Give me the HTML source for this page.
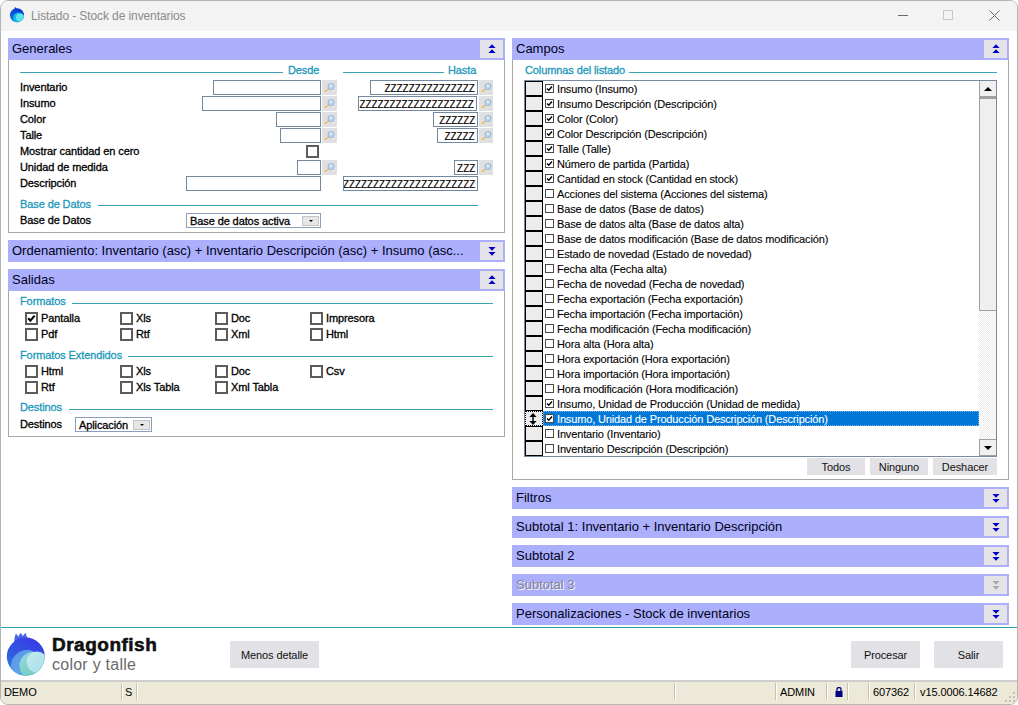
<!DOCTYPE html><html><head><meta charset="utf-8"><style>
html,body{margin:0;padding:0;}
body{width:1018px;height:705px;overflow:hidden;position:relative;background:#fff;font-family:"Liberation Sans",sans-serif;}
.t{position:absolute;white-space:nowrap;font-family:"Liberation Sans",sans-serif;}
.s11{letter-spacing:-0.1px;-webkit-text-stroke:0.3px currentColor}
.inp{position:absolute;box-sizing:border-box;border:1px solid #7488a0;background:#fff;overflow:hidden;}
.inp span{position:absolute;right:2px;top:2px;font:11px/11px "Liberation Sans",sans-serif;color:#000;white-space:nowrap;transform:scaleX(0.895);transform-origin:100% 0;-webkit-text-stroke:0.2px #000}
.cb13{position:absolute;width:13px;height:13px;box-sizing:border-box;border:2px solid #5c5c5c;background:#fff;}
.cb13 svg{position:absolute;left:0;top:0}
.cb9{position:absolute;width:9px;height:9px;box-sizing:border-box;border:1px solid #4a4a4a;background:#fff;}
.btn{position:absolute;background:#e1e1e6;}
</style></head><body>
<div style="position:absolute;left:0;top:0;width:1018px;height:705px;background:#fff;border:1px solid #b4b4b4;box-sizing:border-box;border-radius:8px;overflow:hidden">
</div>
<div style="position:absolute;left:1px;top:1px;width:1016px;height:30px;background:#f3f3f3;border-radius:7px 7px 0 0"></div>
<svg style="position:absolute;left:9px;top:6px" width="17" height="17" viewBox="0 0 17 17">
<defs><linearGradient id="ig" x1="0.6" y1="0" x2="0.3" y2="1"><stop offset="0" stop-color="#0a2fd0"/><stop offset="1" stop-color="#0a7ee8"/></linearGradient>
<clipPath id="ic"><circle cx="8" cy="9.2" r="7"/></clipPath></defs>
<path d="M5 4 L6 1 L8 2.5 Z" fill="#1a40d8"/>
<circle cx="8" cy="9.2" r="7" fill="url(#ig)"/>
<g clip-path="url(#ic)">
<circle cx="9.5" cy="12" r="5.5" fill="#12b8e0"/>
<circle cx="11" cy="11.5" r="4" fill="#5ee0ea"/>
</g>
</svg>
<div class="t " style="left:31px;top:10px;font-size:12px;line-height:12px;color:#8a8a8a;letter-spacing:-0.1px">Listado - Stock de inventarios</div>
<div style="position:absolute;left:898px;top:15px;width:10px;height:1px;background:#6a6a6a"></div>
<div style="position:absolute;left:943px;top:10px;width:10px;height:10px;border:1px solid #c8c8c8;box-sizing:border-box"></div>
<svg style="position:absolute;left:989px;top:10px" width="11" height="11" viewBox="0 0 11 11"><path d="M0.5 0.5L10.5 10.5M10.5 0.5L0.5 10.5" stroke="#6a6a6a" stroke-width="1"/></svg>
<div style="position:absolute;left:8px;top:38px;width:497px;height:195px;border:1px solid #a8a8a8;box-sizing:border-box;background:#fff"></div>
<div style="position:absolute;left:8px;top:38px;width:497px;height:22px;background:#abaffc"></div>
<div class="t " style="left:12px;top:42px;font-size:13px;line-height:13px;color:#000018;">Generales</div>
<div style="position:absolute;left:480px;top:40px;width:23px;height:18px;background:#e3e3e8"></div>
<div style="position:absolute;left:488px;top:44px;width:8px;height:10px;line-height:0"><svg width="8" height="10" viewBox="0 0 8 10"><path d="M4 0.2L7.6 4H0.4Z M4 5.2L7.6 9H0.4Z" fill="#0000c8"/></svg></div>
<div style="position:absolute;left:20px;top:72px;width:263px;height:1px;background:#3ba3b3"></div>
<div class="t s11" style="left:288px;top:65px;font-size:11px;line-height:11px;color:#1c98ba;">Desde</div>
<div style="position:absolute;left:343px;top:72px;width:101px;height:1px;background:#3ba3b3"></div>
<div class="t s11" style="left:448px;top:65px;font-size:11px;line-height:11px;color:#1c98ba;">Hasta</div>
<div class="t s11" style="left:20px;top:82px;font-size:11px;line-height:11px;color:#000;">Inventario</div>
<div class="t s11" style="left:20px;top:98px;font-size:11px;line-height:11px;color:#000;">Insumo</div>
<div class="t s11" style="left:20px;top:114px;font-size:11px;line-height:11px;color:#000;">Color</div>
<div class="t s11" style="left:20px;top:130px;font-size:11px;line-height:11px;color:#000;">Talle</div>
<div class="t s11" style="left:20px;top:146px;font-size:11px;line-height:11px;color:#000;">Mostrar cantidad en cero</div>
<div class="t s11" style="left:20px;top:162px;font-size:11px;line-height:11px;color:#000;">Unidad de medida</div>
<div class="t s11" style="left:20px;top:178px;font-size:11px;line-height:11px;color:#000;">Descripción</div>
<div class="inp" style="left:213px;top:80px;width:108px;height:15px"><span></span></div>
<div style="position:absolute;left:322px;top:80px;width:15px;height:15px;background:#e0e0e3"><svg width="15" height="15" viewBox="0 0 15 15"><path d="M3.3 11.4L6.3 9.2" stroke="#ecbf68" stroke-width="1.7" stroke-linecap="round"/><circle cx="9" cy="6.6" r="3" fill="#bcdaf6" stroke="#9ab0c8" stroke-width="1"/><circle cx="8.8" cy="5.6" r="1.2" fill="#e8f4ff" opacity="0.9"/></svg></div>
<div class="inp" style="left:202px;top:96px;width:119px;height:15px"><span></span></div>
<div style="position:absolute;left:322px;top:96px;width:15px;height:15px;background:#e0e0e3"><svg width="15" height="15" viewBox="0 0 15 15"><path d="M3.3 11.4L6.3 9.2" stroke="#ecbf68" stroke-width="1.7" stroke-linecap="round"/><circle cx="9" cy="6.6" r="3" fill="#bcdaf6" stroke="#9ab0c8" stroke-width="1"/><circle cx="8.8" cy="5.6" r="1.2" fill="#e8f4ff" opacity="0.9"/></svg></div>
<div class="inp" style="left:276px;top:112px;width:45px;height:15px"><span></span></div>
<div style="position:absolute;left:322px;top:112px;width:15px;height:15px;background:#e0e0e3"><svg width="15" height="15" viewBox="0 0 15 15"><path d="M3.3 11.4L6.3 9.2" stroke="#ecbf68" stroke-width="1.7" stroke-linecap="round"/><circle cx="9" cy="6.6" r="3" fill="#bcdaf6" stroke="#9ab0c8" stroke-width="1"/><circle cx="8.8" cy="5.6" r="1.2" fill="#e8f4ff" opacity="0.9"/></svg></div>
<div class="inp" style="left:280px;top:128px;width:41px;height:15px"><span></span></div>
<div style="position:absolute;left:322px;top:128px;width:15px;height:15px;background:#e0e0e3"><svg width="15" height="15" viewBox="0 0 15 15"><path d="M3.3 11.4L6.3 9.2" stroke="#ecbf68" stroke-width="1.7" stroke-linecap="round"/><circle cx="9" cy="6.6" r="3" fill="#bcdaf6" stroke="#9ab0c8" stroke-width="1"/><circle cx="8.8" cy="5.6" r="1.2" fill="#e8f4ff" opacity="0.9"/></svg></div>
<div class="cb13" style="left:306px;top:145px"></div>
<div class="inp" style="left:297px;top:160px;width:24px;height:15px"><span></span></div>
<div style="position:absolute;left:322px;top:160px;width:15px;height:15px;background:#e0e0e3"><svg width="15" height="15" viewBox="0 0 15 15"><path d="M3.3 11.4L6.3 9.2" stroke="#ecbf68" stroke-width="1.7" stroke-linecap="round"/><circle cx="9" cy="6.6" r="3" fill="#bcdaf6" stroke="#9ab0c8" stroke-width="1"/><circle cx="8.8" cy="5.6" r="1.2" fill="#e8f4ff" opacity="0.9"/></svg></div>
<div class="inp" style="left:186px;top:176px;width:135px;height:15px"><span></span></div>
<div class="inp" style="left:370px;top:80px;width:108px;height:15px"><span>ZZZZZZZZZZZZZZZ</span></div>
<div style="position:absolute;left:479px;top:80px;width:14px;height:15px;background:#e0e0e3"><svg width="15" height="15" viewBox="0 0 15 15"><path d="M3.3 11.4L6.3 9.2" stroke="#ecbf68" stroke-width="1.7" stroke-linecap="round"/><circle cx="9" cy="6.6" r="3" fill="#bcdaf6" stroke="#9ab0c8" stroke-width="1"/><circle cx="8.8" cy="5.6" r="1.2" fill="#e8f4ff" opacity="0.9"/></svg></div>
<div class="inp" style="left:358px;top:96px;width:119px;height:15px"><span>ZZZZZZZZZZZZZZZZZZZ</span></div>
<div style="position:absolute;left:479px;top:96px;width:14px;height:15px;background:#e0e0e3"><svg width="15" height="15" viewBox="0 0 15 15"><path d="M3.3 11.4L6.3 9.2" stroke="#ecbf68" stroke-width="1.7" stroke-linecap="round"/><circle cx="9" cy="6.6" r="3" fill="#bcdaf6" stroke="#9ab0c8" stroke-width="1"/><circle cx="8.8" cy="5.6" r="1.2" fill="#e8f4ff" opacity="0.9"/></svg></div>
<div class="inp" style="left:433px;top:112px;width:45px;height:15px"><span>ZZZZZZ</span></div>
<div style="position:absolute;left:479px;top:112px;width:14px;height:15px;background:#e0e0e3"><svg width="15" height="15" viewBox="0 0 15 15"><path d="M3.3 11.4L6.3 9.2" stroke="#ecbf68" stroke-width="1.7" stroke-linecap="round"/><circle cx="9" cy="6.6" r="3" fill="#bcdaf6" stroke="#9ab0c8" stroke-width="1"/><circle cx="8.8" cy="5.6" r="1.2" fill="#e8f4ff" opacity="0.9"/></svg></div>
<div class="inp" style="left:437px;top:128px;width:41px;height:15px"><span>ZZZZZ</span></div>
<div style="position:absolute;left:479px;top:128px;width:14px;height:15px;background:#e0e0e3"><svg width="15" height="15" viewBox="0 0 15 15"><path d="M3.3 11.4L6.3 9.2" stroke="#ecbf68" stroke-width="1.7" stroke-linecap="round"/><circle cx="9" cy="6.6" r="3" fill="#bcdaf6" stroke="#9ab0c8" stroke-width="1"/><circle cx="8.8" cy="5.6" r="1.2" fill="#e8f4ff" opacity="0.9"/></svg></div>
<div class="inp" style="left:454px;top:160px;width:24px;height:15px"><span>ZZZ</span></div>
<div style="position:absolute;left:479px;top:160px;width:14px;height:15px;background:#e0e0e3"><svg width="15" height="15" viewBox="0 0 15 15"><path d="M3.3 11.4L6.3 9.2" stroke="#ecbf68" stroke-width="1.7" stroke-linecap="round"/><circle cx="9" cy="6.6" r="3" fill="#bcdaf6" stroke="#9ab0c8" stroke-width="1"/><circle cx="8.8" cy="5.6" r="1.2" fill="#e8f4ff" opacity="0.9"/></svg></div>
<div class="inp" style="left:343px;top:176px;width:135px;height:15px"><span>ZZZZZZZZZZZZZZZZZZZZZZZZ</span></div>
<div class="t s11" style="left:20px;top:199px;font-size:11px;line-height:11px;color:#1c98ba;">Base de Datos</div>
<div style="position:absolute;left:98px;top:205px;width:380px;height:1px;background:#3ba3b3"></div>
<div class="t s11" style="left:20px;top:215px;font-size:11px;line-height:11px;color:#000;">Base de Datos</div>
<div class="inp" style="left:186px;top:213px;width:135px;height:15px;border-color:#8a9fbc"></div>
<div class="t s11" style="left:190px;top:216px;font-size:11px;line-height:11px;color:#000;">Base de datos activa</div>
<div style="position:absolute;left:302px;top:216px;width:17px;height:10px;background:#e6e6e6;border:1px solid #c4c4c4;box-sizing:border-box"><div style="position:absolute;left:6px;top:3px;width:0;height:0;border-left:2px solid transparent;border-right:2px solid transparent;border-top:2px solid #000"></div></div>
<div style="position:absolute;left:8px;top:240px;width:497px;height:22px;background:#abaffc"></div>
<div class="t " style="left:12px;top:244px;font-size:13px;line-height:13px;color:#000018;">Ordenamiento: Inventario (asc) + Inventario Descripción (asc) + Insumo (asc...</div>
<div style="position:absolute;left:480px;top:242px;width:23px;height:18px;background:#e3e3e8"></div>
<div style="position:absolute;left:488px;top:247px;width:8px;height:10px;line-height:0"><svg width="8" height="10" viewBox="0 0 8 10"><path d="M0.4 0H7.6L4 3.8Z M0.4 5H7.6L4 8.8Z" fill="#0000c8"/></svg></div>
<div style="position:absolute;left:8px;top:269px;width:497px;height:168px;border:1px solid #a8a8a8;box-sizing:border-box;background:#fff"></div>
<div style="position:absolute;left:8px;top:269px;width:497px;height:22px;background:#abaffc"></div>
<div class="t " style="left:12px;top:273px;font-size:13px;line-height:13px;color:#000018;">Salidas</div>
<div style="position:absolute;left:480px;top:271px;width:23px;height:18px;background:#e3e3e8"></div>
<div style="position:absolute;left:488px;top:275px;width:8px;height:10px;line-height:0"><svg width="8" height="10" viewBox="0 0 8 10"><path d="M4 0.2L7.6 4H0.4Z M4 5.2L7.6 9H0.4Z" fill="#0000c8"/></svg></div>
<div class="t s11" style="left:20px;top:296px;font-size:11px;line-height:11px;color:#1c98ba;">Formatos</div>
<div style="position:absolute;left:72px;top:303px;width:421px;height:1px;background:#3ba3b3"></div>
<div class="cb13" style="left:25px;top:312px"><svg width="9" height="9" viewBox="0 0 9 9"><path d="M1.2 4.2L3.4 6.6L7.6 1.6" stroke="#000" stroke-width="2.1" fill="none"/></svg></div>
<div class="t s11" style="left:41px;top:313px;font-size:11px;line-height:11px;color:#000;">Pantalla</div>
<div class="cb13" style="left:120px;top:312px"></div>
<div class="t s11" style="left:136px;top:313px;font-size:11px;line-height:11px;color:#000;">Xls</div>
<div class="cb13" style="left:215px;top:312px"></div>
<div class="t s11" style="left:231px;top:313px;font-size:11px;line-height:11px;color:#000;">Doc</div>
<div class="cb13" style="left:310px;top:312px"></div>
<div class="t s11" style="left:326px;top:313px;font-size:11px;line-height:11px;color:#000;">Impresora</div>
<div class="cb13" style="left:25px;top:328px"></div>
<div class="t s11" style="left:41px;top:329px;font-size:11px;line-height:11px;color:#000;">Pdf</div>
<div class="cb13" style="left:120px;top:328px"></div>
<div class="t s11" style="left:136px;top:329px;font-size:11px;line-height:11px;color:#000;">Rtf</div>
<div class="cb13" style="left:215px;top:328px"></div>
<div class="t s11" style="left:231px;top:329px;font-size:11px;line-height:11px;color:#000;">Xml</div>
<div class="cb13" style="left:310px;top:328px"></div>
<div class="t s11" style="left:326px;top:329px;font-size:11px;line-height:11px;color:#000;">Html</div>
<div class="t s11" style="left:20px;top:350px;font-size:11px;line-height:11px;color:#1c98ba;">Formatos Extendidos</div>
<div style="position:absolute;left:128px;top:356px;width:365px;height:1px;background:#3ba3b3"></div>
<div class="cb13" style="left:25px;top:365px"></div>
<div class="t s11" style="left:41px;top:366px;font-size:11px;line-height:11px;color:#000;">Html</div>
<div class="cb13" style="left:120px;top:365px"></div>
<div class="t s11" style="left:136px;top:366px;font-size:11px;line-height:11px;color:#000;">Xls</div>
<div class="cb13" style="left:215px;top:365px"></div>
<div class="t s11" style="left:231px;top:366px;font-size:11px;line-height:11px;color:#000;">Doc</div>
<div class="cb13" style="left:310px;top:365px"></div>
<div class="t s11" style="left:326px;top:366px;font-size:11px;line-height:11px;color:#000;">Csv</div>
<div class="cb13" style="left:25px;top:381px"></div>
<div class="t s11" style="left:41px;top:382px;font-size:11px;line-height:11px;color:#000;">Rtf</div>
<div class="cb13" style="left:120px;top:381px"></div>
<div class="t s11" style="left:136px;top:382px;font-size:11px;line-height:11px;color:#000;">Xls Tabla</div>
<div class="cb13" style="left:215px;top:381px"></div>
<div class="t s11" style="left:231px;top:382px;font-size:11px;line-height:11px;color:#000;">Xml Tabla</div>
<div class="t s11" style="left:20px;top:402px;font-size:11px;line-height:11px;color:#1c98ba;">Destinos</div>
<div style="position:absolute;left:69px;top:409px;width:424px;height:1px;background:#3ba3b3"></div>
<div class="t s11" style="left:20px;top:419px;font-size:11px;line-height:11px;color:#000;">Destinos</div>
<div class="inp" style="left:75px;top:417px;width:77px;height:15px;border-color:#8a9fbc"></div>
<div class="t s11" style="left:79px;top:420px;font-size:11px;line-height:11px;color:#000;">Aplicación</div>
<div style="position:absolute;left:133px;top:420px;width:17px;height:10px;background:#e6e6e6;border:1px solid #c4c4c4;box-sizing:border-box"><div style="position:absolute;left:6px;top:3px;width:0;height:0;border-left:2px solid transparent;border-right:2px solid transparent;border-top:2px solid #000"></div></div>
<div style="position:absolute;left:512px;top:38px;width:497px;height:442px;border:1px solid #a8a8a8;box-sizing:border-box;background:#fff"></div>
<div style="position:absolute;left:512px;top:38px;width:497px;height:22px;background:#abaffc"></div>
<div class="t " style="left:516px;top:42px;font-size:13px;line-height:13px;color:#000018;">Campos</div>
<div style="position:absolute;left:984px;top:40px;width:23px;height:18px;background:#e3e3e8"></div>
<div style="position:absolute;left:992px;top:44px;width:8px;height:10px;line-height:0"><svg width="8" height="10" viewBox="0 0 8 10"><path d="M4 0.2L7.6 4H0.4Z M4 5.2L7.6 9H0.4Z" fill="#0000c8"/></svg></div>
<div class="t s11" style="left:525px;top:65px;font-size:11px;line-height:11px;color:#1c98ba;">Columnas del listado</div>
<div style="position:absolute;left:629px;top:72px;width:368px;height:1px;background:#3ba3b3"></div>
<div style="position:absolute;left:524px;top:80px;width:473px;height:377px;border:1px solid #7a88a0;box-sizing:border-box;background:#fff"></div>
<div style="position:absolute;left:525px;top:81px;width:18px;height:15px;background:#000"></div>
<div style="position:absolute;left:526px;top:82px;width:16px;height:13px;background:#ececec"></div>
<div class="cb9" style="left:545px;top:84px"><svg style="position:absolute;left:0;top:0" width="7" height="7" viewBox="0 0 7 7"><path d="M1 3.5L2.8 5.3L6 1.5" stroke="#000" stroke-width="1.4" fill="none"/></svg></div>
<div class="t " style="left:557px;top:84px;font-size:11px;line-height:11px;color:#000;letter-spacing:-0.15px;-webkit-text-stroke:0.1px currentColor">Insumo (Insumo)</div>
<div style="position:absolute;left:525px;top:96px;width:18px;height:15px;background:#000"></div>
<div style="position:absolute;left:526px;top:97px;width:16px;height:13px;background:#ececec"></div>
<div class="cb9" style="left:545px;top:99px"><svg style="position:absolute;left:0;top:0" width="7" height="7" viewBox="0 0 7 7"><path d="M1 3.5L2.8 5.3L6 1.5" stroke="#000" stroke-width="1.4" fill="none"/></svg></div>
<div class="t " style="left:557px;top:99px;font-size:11px;line-height:11px;color:#000;letter-spacing:-0.15px;-webkit-text-stroke:0.1px currentColor">Insumo Descripción (Descripción)</div>
<div style="position:absolute;left:525px;top:111px;width:18px;height:15px;background:#000"></div>
<div style="position:absolute;left:526px;top:112px;width:16px;height:13px;background:#ececec"></div>
<div class="cb9" style="left:545px;top:114px"><svg style="position:absolute;left:0;top:0" width="7" height="7" viewBox="0 0 7 7"><path d="M1 3.5L2.8 5.3L6 1.5" stroke="#000" stroke-width="1.4" fill="none"/></svg></div>
<div class="t " style="left:557px;top:114px;font-size:11px;line-height:11px;color:#000;letter-spacing:-0.15px;-webkit-text-stroke:0.1px currentColor">Color (Color)</div>
<div style="position:absolute;left:525px;top:126px;width:18px;height:15px;background:#000"></div>
<div style="position:absolute;left:526px;top:127px;width:16px;height:13px;background:#ececec"></div>
<div class="cb9" style="left:545px;top:129px"><svg style="position:absolute;left:0;top:0" width="7" height="7" viewBox="0 0 7 7"><path d="M1 3.5L2.8 5.3L6 1.5" stroke="#000" stroke-width="1.4" fill="none"/></svg></div>
<div class="t " style="left:557px;top:129px;font-size:11px;line-height:11px;color:#000;letter-spacing:-0.15px;-webkit-text-stroke:0.1px currentColor">Color Descripción (Descripción)</div>
<div style="position:absolute;left:525px;top:141px;width:18px;height:15px;background:#000"></div>
<div style="position:absolute;left:526px;top:142px;width:16px;height:13px;background:#ececec"></div>
<div class="cb9" style="left:545px;top:144px"><svg style="position:absolute;left:0;top:0" width="7" height="7" viewBox="0 0 7 7"><path d="M1 3.5L2.8 5.3L6 1.5" stroke="#000" stroke-width="1.4" fill="none"/></svg></div>
<div class="t " style="left:557px;top:144px;font-size:11px;line-height:11px;color:#000;letter-spacing:-0.15px;-webkit-text-stroke:0.1px currentColor">Talle (Talle)</div>
<div style="position:absolute;left:525px;top:156px;width:18px;height:15px;background:#000"></div>
<div style="position:absolute;left:526px;top:157px;width:16px;height:13px;background:#ececec"></div>
<div class="cb9" style="left:545px;top:159px"><svg style="position:absolute;left:0;top:0" width="7" height="7" viewBox="0 0 7 7"><path d="M1 3.5L2.8 5.3L6 1.5" stroke="#000" stroke-width="1.4" fill="none"/></svg></div>
<div class="t " style="left:557px;top:159px;font-size:11px;line-height:11px;color:#000;letter-spacing:-0.15px;-webkit-text-stroke:0.1px currentColor">Número de partida (Partida)</div>
<div style="position:absolute;left:525px;top:171px;width:18px;height:15px;background:#000"></div>
<div style="position:absolute;left:526px;top:172px;width:16px;height:13px;background:#ececec"></div>
<div class="cb9" style="left:545px;top:174px"><svg style="position:absolute;left:0;top:0" width="7" height="7" viewBox="0 0 7 7"><path d="M1 3.5L2.8 5.3L6 1.5" stroke="#000" stroke-width="1.4" fill="none"/></svg></div>
<div class="t " style="left:557px;top:174px;font-size:11px;line-height:11px;color:#000;letter-spacing:-0.15px;-webkit-text-stroke:0.1px currentColor">Cantidad en stock (Cantidad en stock)</div>
<div style="position:absolute;left:525px;top:186px;width:18px;height:15px;background:#000"></div>
<div style="position:absolute;left:526px;top:187px;width:16px;height:13px;background:#ececec"></div>
<div class="cb9" style="left:545px;top:189px"></div>
<div class="t " style="left:557px;top:189px;font-size:11px;line-height:11px;color:#000;letter-spacing:-0.15px;-webkit-text-stroke:0.1px currentColor">Acciones del sistema (Acciones del sistema)</div>
<div style="position:absolute;left:525px;top:201px;width:18px;height:15px;background:#000"></div>
<div style="position:absolute;left:526px;top:202px;width:16px;height:13px;background:#ececec"></div>
<div class="cb9" style="left:545px;top:204px"></div>
<div class="t " style="left:557px;top:204px;font-size:11px;line-height:11px;color:#000;letter-spacing:-0.15px;-webkit-text-stroke:0.1px currentColor">Base de datos (Base de datos)</div>
<div style="position:absolute;left:525px;top:216px;width:18px;height:15px;background:#000"></div>
<div style="position:absolute;left:526px;top:217px;width:16px;height:13px;background:#ececec"></div>
<div class="cb9" style="left:545px;top:219px"></div>
<div class="t " style="left:557px;top:219px;font-size:11px;line-height:11px;color:#000;letter-spacing:-0.15px;-webkit-text-stroke:0.1px currentColor">Base de datos alta (Base de datos alta)</div>
<div style="position:absolute;left:525px;top:231px;width:18px;height:15px;background:#000"></div>
<div style="position:absolute;left:526px;top:232px;width:16px;height:13px;background:#ececec"></div>
<div class="cb9" style="left:545px;top:234px"></div>
<div class="t " style="left:557px;top:234px;font-size:11px;line-height:11px;color:#000;letter-spacing:-0.15px;-webkit-text-stroke:0.1px currentColor">Base de datos modificación (Base de datos modificación)</div>
<div style="position:absolute;left:525px;top:246px;width:18px;height:15px;background:#000"></div>
<div style="position:absolute;left:526px;top:247px;width:16px;height:13px;background:#ececec"></div>
<div class="cb9" style="left:545px;top:249px"></div>
<div class="t " style="left:557px;top:249px;font-size:11px;line-height:11px;color:#000;letter-spacing:-0.15px;-webkit-text-stroke:0.1px currentColor">Estado de novedad (Estado de novedad)</div>
<div style="position:absolute;left:525px;top:261px;width:18px;height:15px;background:#000"></div>
<div style="position:absolute;left:526px;top:262px;width:16px;height:13px;background:#ececec"></div>
<div class="cb9" style="left:545px;top:264px"></div>
<div class="t " style="left:557px;top:264px;font-size:11px;line-height:11px;color:#000;letter-spacing:-0.15px;-webkit-text-stroke:0.1px currentColor">Fecha alta (Fecha alta)</div>
<div style="position:absolute;left:525px;top:276px;width:18px;height:15px;background:#000"></div>
<div style="position:absolute;left:526px;top:277px;width:16px;height:13px;background:#ececec"></div>
<div class="cb9" style="left:545px;top:279px"></div>
<div class="t " style="left:557px;top:279px;font-size:11px;line-height:11px;color:#000;letter-spacing:-0.15px;-webkit-text-stroke:0.1px currentColor">Fecha de novedad (Fecha de novedad)</div>
<div style="position:absolute;left:525px;top:291px;width:18px;height:15px;background:#000"></div>
<div style="position:absolute;left:526px;top:292px;width:16px;height:13px;background:#ececec"></div>
<div class="cb9" style="left:545px;top:294px"></div>
<div class="t " style="left:557px;top:294px;font-size:11px;line-height:11px;color:#000;letter-spacing:-0.15px;-webkit-text-stroke:0.1px currentColor">Fecha exportación (Fecha exportación)</div>
<div style="position:absolute;left:525px;top:306px;width:18px;height:15px;background:#000"></div>
<div style="position:absolute;left:526px;top:307px;width:16px;height:13px;background:#ececec"></div>
<div class="cb9" style="left:545px;top:309px"></div>
<div class="t " style="left:557px;top:309px;font-size:11px;line-height:11px;color:#000;letter-spacing:-0.15px;-webkit-text-stroke:0.1px currentColor">Fecha importación (Fecha importación)</div>
<div style="position:absolute;left:525px;top:321px;width:18px;height:15px;background:#000"></div>
<div style="position:absolute;left:526px;top:322px;width:16px;height:13px;background:#ececec"></div>
<div class="cb9" style="left:545px;top:324px"></div>
<div class="t " style="left:557px;top:324px;font-size:11px;line-height:11px;color:#000;letter-spacing:-0.15px;-webkit-text-stroke:0.1px currentColor">Fecha modificación (Fecha modificación)</div>
<div style="position:absolute;left:525px;top:336px;width:18px;height:15px;background:#000"></div>
<div style="position:absolute;left:526px;top:337px;width:16px;height:13px;background:#ececec"></div>
<div class="cb9" style="left:545px;top:339px"></div>
<div class="t " style="left:557px;top:339px;font-size:11px;line-height:11px;color:#000;letter-spacing:-0.15px;-webkit-text-stroke:0.1px currentColor">Hora alta (Hora alta)</div>
<div style="position:absolute;left:525px;top:351px;width:18px;height:15px;background:#000"></div>
<div style="position:absolute;left:526px;top:352px;width:16px;height:13px;background:#ececec"></div>
<div class="cb9" style="left:545px;top:354px"></div>
<div class="t " style="left:557px;top:354px;font-size:11px;line-height:11px;color:#000;letter-spacing:-0.15px;-webkit-text-stroke:0.1px currentColor">Hora exportación (Hora exportación)</div>
<div style="position:absolute;left:525px;top:366px;width:18px;height:15px;background:#000"></div>
<div style="position:absolute;left:526px;top:367px;width:16px;height:13px;background:#ececec"></div>
<div class="cb9" style="left:545px;top:369px"></div>
<div class="t " style="left:557px;top:369px;font-size:11px;line-height:11px;color:#000;letter-spacing:-0.15px;-webkit-text-stroke:0.1px currentColor">Hora importación (Hora importación)</div>
<div style="position:absolute;left:525px;top:381px;width:18px;height:15px;background:#000"></div>
<div style="position:absolute;left:526px;top:382px;width:16px;height:13px;background:#ececec"></div>
<div class="cb9" style="left:545px;top:384px"></div>
<div class="t " style="left:557px;top:384px;font-size:11px;line-height:11px;color:#000;letter-spacing:-0.15px;-webkit-text-stroke:0.1px currentColor">Hora modificación (Hora modificación)</div>
<div style="position:absolute;left:525px;top:396px;width:18px;height:15px;background:#000"></div>
<div style="position:absolute;left:526px;top:397px;width:16px;height:13px;background:#ececec"></div>
<div class="cb9" style="left:545px;top:399px"><svg style="position:absolute;left:0;top:0" width="7" height="7" viewBox="0 0 7 7"><path d="M1 3.5L2.8 5.3L6 1.5" stroke="#000" stroke-width="1.4" fill="none"/></svg></div>
<div class="t " style="left:557px;top:399px;font-size:11px;line-height:11px;color:#000;letter-spacing:-0.15px;-webkit-text-stroke:0.1px currentColor">Insumo, Unidad de Producción (Unidad de medida)</div>
<div style="position:absolute;left:525px;top:411px;width:18px;height:15px;background:#000"></div>
<div style="position:absolute;left:526px;top:412px;width:16px;height:13px;background:#ececec"></div>
<div style="position:absolute;left:543px;top:411px;width:436px;height:15px;background:#0078d7;outline:1px dotted #7fb0e0;outline-offset:-1px"></div>
<div style="position:absolute;left:525px;top:411px;width:18px;height:15px;background:#ececec;border:1px dotted #000;box-sizing:border-box"></div>
<svg style="position:absolute;left:529px;top:413px" width="8" height="12" viewBox="0 0 8 12"><path d="M4 0L7.6 4H4.7V8H7.6L4 12L0.4 8H3.3V4H0.4Z" fill="#000"/></svg>
<div class="cb9" style="left:545px;top:414px"><svg style="position:absolute;left:0;top:0" width="7" height="7" viewBox="0 0 7 7"><path d="M1 3.5L2.8 5.3L6 1.5" stroke="#000" stroke-width="1.4" fill="none"/></svg></div>
<div class="t " style="left:557px;top:414px;font-size:11px;line-height:11px;color:#fff;letter-spacing:-0.15px;-webkit-text-stroke:0.1px currentColor">Insumo, Unidad de Producción Descripción (Descripción)</div>
<div style="position:absolute;left:525px;top:426px;width:18px;height:15px;background:#000"></div>
<div style="position:absolute;left:526px;top:427px;width:16px;height:13px;background:#ececec"></div>
<div class="cb9" style="left:545px;top:429px"></div>
<div class="t " style="left:557px;top:429px;font-size:11px;line-height:11px;color:#000;letter-spacing:-0.15px;-webkit-text-stroke:0.1px currentColor">Inventario (Inventario)</div>
<div style="position:absolute;left:525px;top:441px;width:18px;height:15px;background:#000"></div>
<div style="position:absolute;left:526px;top:442px;width:16px;height:13px;background:#ececec"></div>
<div class="cb9" style="left:545px;top:444px"></div>
<div class="t " style="left:557px;top:444px;font-size:11px;line-height:11px;color:#000;letter-spacing:-0.15px;-webkit-text-stroke:0.1px currentColor">Inventario Descripción (Descripción)</div>
<div style="position:absolute;left:979px;top:81px;width:17px;height:375px;background:repeating-conic-gradient(#ececec 0 25%, #ffffff 0 50%) 0 0/2px 2px"></div>
<div style="position:absolute;left:979px;top:81px;width:17px;height:17px;background:#f0f0f0;border-left:1px solid #a0a0a0;border-bottom:2px solid #a0a0a0;box-sizing:border-box"></div>
<div style="position:absolute;left:984px;top:87px;width:0;height:0;border-left:4px solid transparent;border-right:4px solid transparent;border-bottom:4px solid #000"></div>
<div style="position:absolute;left:979px;top:98px;width:17px;height:213px;background:#efefef;border:1px solid #a0a0a0;border-right:none;box-sizing:border-box"></div>
<div style="position:absolute;left:979px;top:439px;width:17px;height:17px;background:#f0f0f0;border:1px solid #a0a0a0;border-right:none;box-sizing:border-box"></div>
<div style="position:absolute;left:984px;top:446px;width:0;height:0;border-left:4px solid transparent;border-right:4px solid transparent;border-top:4px solid #000"></div>
<div class="btn" style="left:807px;top:458px;width:58px;height:17px"></div>
<div class="t" style="left:807px;top:461px;width:58px;text-align:center;font-size:11px;line-height:12px;color:#111;letter-spacing:-0.1px">Todos</div>
<div class="btn" style="left:870px;top:458px;width:58px;height:17px"></div>
<div class="t" style="left:870px;top:461px;width:58px;text-align:center;font-size:11px;line-height:12px;color:#111;letter-spacing:-0.1px">Ninguno</div>
<div class="btn" style="left:933px;top:458px;width:64px;height:17px"></div>
<div class="t" style="left:933px;top:461px;width:64px;text-align:center;font-size:11px;line-height:12px;color:#111;letter-spacing:-0.1px">Deshacer</div>
<div style="position:absolute;left:512px;top:487px;width:497px;height:22px;background:#abaffc"></div>
<div class="t " style="left:516px;top:491px;font-size:13px;line-height:13px;color:#000018;">Filtros</div>
<div style="position:absolute;left:984px;top:489px;width:23px;height:18px;background:#e3e3e8"></div>
<div style="position:absolute;left:992px;top:494px;width:8px;height:10px;line-height:0"><svg width="8" height="10" viewBox="0 0 8 10"><path d="M0.4 0H7.6L4 3.8Z M0.4 5H7.6L4 8.8Z" fill="#0000c8"/></svg></div>
<div style="position:absolute;left:512px;top:516px;width:497px;height:22px;background:#abaffc"></div>
<div class="t " style="left:516px;top:520px;font-size:13px;line-height:13px;color:#000018;">Subtotal 1: Inventario + Inventario Descripción</div>
<div style="position:absolute;left:984px;top:518px;width:23px;height:18px;background:#e3e3e8"></div>
<div style="position:absolute;left:992px;top:523px;width:8px;height:10px;line-height:0"><svg width="8" height="10" viewBox="0 0 8 10"><path d="M0.4 0H7.6L4 3.8Z M0.4 5H7.6L4 8.8Z" fill="#0000c8"/></svg></div>
<div style="position:absolute;left:512px;top:545px;width:497px;height:22px;background:#abaffc"></div>
<div class="t " style="left:516px;top:549px;font-size:13px;line-height:13px;color:#000018;">Subtotal 2</div>
<div style="position:absolute;left:984px;top:547px;width:23px;height:18px;background:#e3e3e8"></div>
<div style="position:absolute;left:992px;top:552px;width:8px;height:10px;line-height:0"><svg width="8" height="10" viewBox="0 0 8 10"><path d="M0.4 0H7.6L4 3.8Z M0.4 5H7.6L4 8.8Z" fill="#0000c8"/></svg></div>
<div style="position:absolute;left:512px;top:574px;width:497px;height:22px;background:#abaffc"></div>
<div class="t " style="left:516px;top:578px;font-size:13px;line-height:13px;color:#85858f;text-shadow:1px 1px 0 #f8f8ff;">Subtotal 3</div>
<div style="position:absolute;left:984px;top:576px;width:23px;height:18px;background:#e3e3e8"></div>
<div style="position:absolute;left:992px;top:581px;width:8px;height:10px;line-height:0"><svg width="8" height="10" viewBox="0 0 8 10"><path d="M0.4 0H7.6L4 3.8Z M0.4 5H7.6L4 8.8Z" fill="#a8a8a8"/></svg></div>
<div style="position:absolute;left:512px;top:603px;width:497px;height:22px;background:#abaffc"></div>
<div class="t " style="left:516px;top:607px;font-size:13px;line-height:13px;color:#000018;">Personalizaciones - Stock de inventarios</div>
<div style="position:absolute;left:984px;top:605px;width:23px;height:18px;background:#e3e3e8"></div>
<div style="position:absolute;left:992px;top:610px;width:8px;height:10px;line-height:0"><svg width="8" height="10" viewBox="0 0 8 10"><path d="M0.4 0H7.6L4 3.8Z M0.4 5H7.6L4 8.8Z" fill="#0000c8"/></svg></div>
<div style="position:absolute;left:1px;top:627px;width:1016px;height:1px;background:#2aa0b0"></div>
<svg style="position:absolute;left:5px;top:631px" width="42" height="47" viewBox="0 0 42 47">
<defs>
<linearGradient id="lg1" x1="0.7" y1="0" x2="0.2" y2="1"><stop offset="0" stop-color="#3a3ae6"/><stop offset="0.6" stop-color="#2f5ee0"/><stop offset="1" stop-color="#3a7ee8"/></linearGradient>
<linearGradient id="lg2" x1="0" y1="0" x2="1" y2="1"><stop offset="0" stop-color="#5b95ea"/><stop offset="1" stop-color="#62b6e6"/></linearGradient>
<linearGradient id="lg3" x1="0" y1="0" x2="0.5" y2="1"><stop offset="0" stop-color="#9cd8e4"/><stop offset="1" stop-color="#6fcdb8"/></linearGradient>
<linearGradient id="lg4" x1="0" y1="0" x2="1" y2="1"><stop offset="0" stop-color="#c4ecf2"/><stop offset="1" stop-color="#a6dce6"/></linearGradient>
<clipPath id="cc"><circle cx="20.8" cy="25.6" r="19"/></clipPath>
</defs>
<path d="M9 12 Q9.5 5 11 2.5 Q12.5 5 13.5 5.5 Q14.5 3 16 1.8 Q17 4.5 18 5 Q19 3 20.5 1.8 Q21 4.5 22.5 6.5 Z" fill="#4a62e6"/>
<circle cx="20.8" cy="25.6" r="19" fill="url(#lg1)"/>
<g clip-path="url(#cc)">
<circle cx="22" cy="35" r="16" fill="url(#lg2)"/>
<circle cx="28" cy="34.5" r="13.5" fill="url(#lg3)"/>
<circle cx="32" cy="31" r="10.5" fill="url(#lg4)"/>
</g>
</svg>
<div class="t " style="left:52px;top:635px;font-size:19px;line-height:19px;color:#111;font-weight:bold;letter-spacing:0.5px;-webkit-text-stroke:0.6px #111">Dragonfish</div>
<div class="t " style="left:52px;top:657px;font-size:16px;line-height:16px;color:#6a6a6a;letter-spacing:0.25px">color y talle</div>
<div class="btn" style="left:230px;top:641px;width:89px;height:27px"></div>
<div class="t" style="left:230px;top:649px;width:89px;text-align:center;font-size:11px;line-height:12px;color:#111;letter-spacing:-0.1px">Menos detalle</div>
<div class="btn" style="left:851px;top:641px;width:69px;height:27px"></div>
<div class="t" style="left:851px;top:649px;width:69px;text-align:center;font-size:11px;line-height:12px;color:#111;letter-spacing:-0.1px">Procesar</div>
<div class="btn" style="left:934px;top:641px;width:69px;height:27px"></div>
<div class="t" style="left:934px;top:649px;width:69px;text-align:center;font-size:11px;line-height:12px;color:#111;letter-spacing:-0.1px">Salir</div>
<div style="position:absolute;left:1px;top:680px;width:1016px;height:24px;background:#ece9d8;border-top:2px solid #cdcdcd;box-sizing:border-box;border-radius:0 0 7px 7px"></div>
<div class="t " style="left:4px;top:687px;font-size:11px;line-height:11px;color:#000;letter-spacing:-0.1px">DEMO</div>
<div style="position:absolute;left:121px;top:683px;width:1px;height:17px;background:#c5c2b2"></div>
<div style="position:absolute;left:122px;top:683px;width:1px;height:17px;background:#fff"></div>
<div class="t " style="left:125px;top:687px;font-size:11px;line-height:11px;color:#000;">S</div>
<div style="position:absolute;left:136px;top:683px;width:1px;height:17px;background:#c5c2b2"></div>
<div style="position:absolute;left:137px;top:683px;width:1px;height:17px;background:#fff"></div>
<div style="position:absolute;left:674px;top:683px;width:1px;height:17px;background:#c5c2b2"></div>
<div style="position:absolute;left:675px;top:683px;width:1px;height:17px;background:#fff"></div>
<div style="position:absolute;left:775px;top:683px;width:1px;height:17px;background:#c5c2b2"></div>
<div style="position:absolute;left:776px;top:683px;width:1px;height:17px;background:#fff"></div>
<div style="position:absolute;left:826px;top:683px;width:1px;height:17px;background:#c5c2b2"></div>
<div style="position:absolute;left:827px;top:683px;width:1px;height:17px;background:#fff"></div>
<div style="position:absolute;left:847px;top:683px;width:1px;height:17px;background:#c5c2b2"></div>
<div style="position:absolute;left:848px;top:683px;width:1px;height:17px;background:#fff"></div>
<div style="position:absolute;left:868px;top:683px;width:1px;height:17px;background:#c5c2b2"></div>
<div style="position:absolute;left:869px;top:683px;width:1px;height:17px;background:#fff"></div>
<div style="position:absolute;left:914px;top:683px;width:1px;height:17px;background:#c5c2b2"></div>
<div style="position:absolute;left:915px;top:683px;width:1px;height:17px;background:#fff"></div>
<div class="t " style="left:780px;top:687px;font-size:11px;line-height:11px;color:#000;letter-spacing:-0.1px">ADMIN</div>
<svg style="position:absolute;left:835px;top:687px" width="8" height="10" viewBox="0 0 8 10"><path d="M2 4V2.5Q2 0.5 4 0.5Q6 0.5 6 2.5V4" stroke="#000080" stroke-width="1.3" fill="none"/><rect x="0.5" y="4" width="7" height="6" fill="#000080"/></svg>
<div class="t " style="left:873px;top:687px;font-size:11px;line-height:11px;color:#000;letter-spacing:-0.1px">607362</div>
<div class="t " style="left:920px;top:687px;font-size:11px;line-height:11px;color:#000;letter-spacing:-0.1px">v15.0006.14682</div>
<div style="position:absolute;left:1013px;top:692px;width:2px;height:2px;background:#c6c2ae"></div>
<div style="position:absolute;left:1009px;top:696px;width:2px;height:2px;background:#c6c2ae"></div>
<div style="position:absolute;left:1013px;top:696px;width:2px;height:2px;background:#c6c2ae"></div>
<div style="position:absolute;left:1005px;top:700px;width:2px;height:2px;background:#c6c2ae"></div>
<div style="position:absolute;left:1009px;top:700px;width:2px;height:2px;background:#c6c2ae"></div>
<div style="position:absolute;left:1013px;top:700px;width:2px;height:2px;background:#c6c2ae"></div>
</body></html>
